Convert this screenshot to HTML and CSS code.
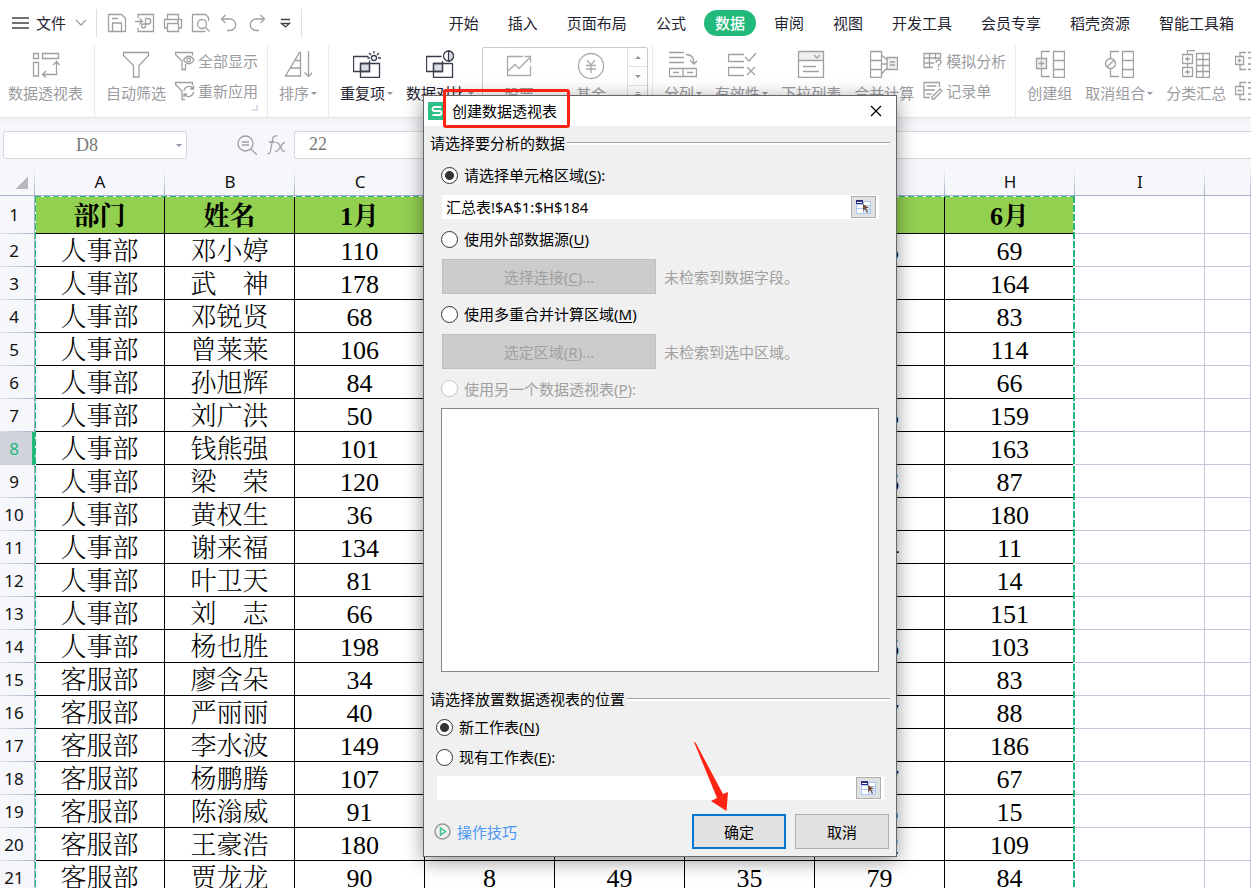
FILE: index.html
```html
<!DOCTYPE html>
<html lang="zh-CN">
<head>
<meta charset="utf-8">
<title>创建数据透视表</title>
<link rel="stylesheet" href="styles.css">
</head>
<body>
<div class="app">
  <header class="topbar">
    <button class="file-menu" type="button">
      <svg class="ic dark" width="18" height="14" viewBox="0 0 18 14"><path d="M0 2h17M0 7h17M0 12h17" stroke-width="1.5"/></svg>
      <span>文件</span>
      <svg class="ic" width="12" height="8" viewBox="0 0 12 8"><path d="M1 1l5 5 5-5"/></svg>
    </button>
    <span class="bar-sep"></span>
    <div class="quick">
      <button type="button" aria-label="保存"><svg class="ic" width="20" height="20" viewBox="0 0 20 20"><path d="M1.500 1.500h13l4 4v13h-17z" stroke-linejoin="round"/><path d="M5 5.500h6M5.500 18v-8h9v8"/></svg></button>
      <button type="button" aria-label="输出为PDF"><svg class="ic" width="20" height="20" viewBox="0 0 20 20"><path d="M3 5V1.500h15.500v17H3V15M0 8.500h7M4.500 5.500l3 3-3 3"/><path d="M10.500 5.500H13a2.500 2.500 0 0 1 0 5.500h-2.500V5.500M10.500 11v2a2 2 0 1 1-2-2h2"/></svg></button>
      <button type="button" aria-label="打印"><svg class="ic" width="20" height="20" viewBox="0 0 20 20"><path d="M4.500 6V1.500h11V6M4.500 15h-3V6.500h17V15h-3M4.500 10.500h11v8h-11zM14 8.500h2"/></svg></button>
      <button type="button" aria-label="打印预览"><svg class="ic" width="20" height="20" viewBox="0 0 20 20"><path d="M17.500 8V4.500l-3-3h-13v17h13"/><circle cx="11" cy="11" r="4.500"/><path d="M14.500 14.500l4 4"/></svg></button>
      <button type="button" aria-label="撤销"><svg class="ic" width="20" height="20" viewBox="0 0 20 20"><path d="M6.500 2L2.500 6l4 4M2.500 6H11a5.500 5.500 0 0 1 0 11.500H8"/></svg></button>
      <button type="button" aria-label="恢复"><svg class="ic" width="20" height="20" viewBox="0 0 20 20"><path d="M13.500 2l4 4-4 4M17.500 6H9a5.500 5.500 0 0 0 0 11.500h3"/></svg></button>
      <button type="button" aria-label="自定义"><svg class="ic dark" width="20" height="20" viewBox="0 0 20 20"><path d="M6 6.500h9M6.500 10.500l4 3.500 4-3.500z"/></svg></button>
    </div>
    <span class="bar-sep"></span>
    <nav class="tabs">
      <button type="button">开始</button>
      <button type="button">插入</button>
      <button type="button">页面布局</button>
      <button type="button">公式</button>
      <button type="button" class="active">数据</button>
      <button type="button">审阅</button>
      <button type="button">视图</button>
      <button type="button">开发工具</button>
      <button type="button">会员专享</button>
      <button type="button">稻壳资源</button>
      <button type="button">智能工具箱</button>
    </nav>
  </header>

  <section class="ribbon">
    <button class="big" type="button">
      <svg class="ic" width="28" height="28" viewBox="0 0 28 28"><path d="M1.500 3.500h5v5h-5zM10.500 3.500h16v5h-16zM1.500 12.500h5v13.500h-5zM11 24.500h13.500V12M14 21l-3.500 3.500 3.500 3M21 15l3.500-3.500 3 3.500"/></svg>
      <span>数据透视表</span>
    </button>
    <i class="sep"></i>
    <button class="big" type="button">
      <svg class="ic" width="28" height="28" viewBox="0 0 28 28"><path d="M1.500 2.500h25v3L17 15.500V27h-5.500V15.500L1.500 5.500z"/></svg>
      <span>自动筛选</span>
    </button>
    <div class="stack filter-stack">
      <button type="button"><svg class="ic" width="20" height="20" viewBox="0 0 20 20"><path d="M17.500 4.500V1.500h-17v2L7 10v8.500h3.500V13"/><path d="M8.500 9c3-5 7.500-5 10.500 0-3 5-7.500 5-10.500 0z"/><circle cx="13.700" cy="9" r="1.800"/></svg>全部显示</button>
      <button type="button"><svg class="ic" width="20" height="20" viewBox="0 0 20 20"><path d="M17.500 4V1.500h-17v2L7 10v8.500h3"/><path d="M9 10a5 5 0 0 1 9-2.500M18.500 4.500v3.500H15M18.500 11a5 5 0 0 1-9 2.500M9 16v-3h3"/></svg>重新应用</button>
    </div>
    <i class="sep"></i>
    <button class="big" type="button">
      <svg class="ic" width="28" height="28" viewBox="0 0 28 28"><path d="M16.500 2.500V26h-15L15.500 2.500zM11 10.500h5.500M6.500 18h10M24.500 1v25.500M20.500 22.500l4 4 4-4"/></svg>
      <span>排序<b class="caret"></b></span>
    </button>
    <i class="sep"></i>
    <button class="big on" type="button">
      <svg class="ic" width="28" height="28" viewBox="0 0 28 28"><path class="fill" d="M7.500 13.500h9v8h-9z"/><path d="M16.500 10.500v11H.500v-15h15M7.500 13.500h19v14h-19z"/><circle cx="21" cy="8" r="2.500"/><path d="M21 1v2.500M16 3l2 2M26 3l-2 2M14.500 8H17M25 8h3"/></svg>
      <span>重复项<b class="caret"></b></span>
    </button>
    <button class="big on" type="button">
      <svg class="ic" width="28" height="28" viewBox="0 0 28 28"><path class="fill" d="M7.500 13.500h9v8h-9z"/><path d="M16.500 11v10.500H.500v-15h15M26.500 13.500v14h-19v-14h19"/><circle cx="22.500" cy="6" r="5"/><path class="fill" d="M22.500 1a5 5 0 0 1 0 10z"/></svg>
      <span>数据对比<b class="caret"></b></span>
    </button>
    <div class="gallery">
      <button type="button"><svg class="ic" width="28" height="28" viewBox="0 0 28 28"><path d="M18 4.500H2.500v19h23V14M3 19l7-6.500 4 4L25.500 5M19.500 4.500h6v6"/></svg>股票</button>
      <button type="button"><svg class="ic" width="28" height="28" viewBox="0 0 28 28"><circle cx="14" cy="14" r="12.500"/><path d="M10 8l4 5 4-5M9 13.500h10M9 17h10M14 13v8"/></svg>基金</button>
      <div class="spin"><span><b class="caret up"></b></span><span><b class="caret"></b></span><span><b class="caret line"></b></span></div>
    </div>
    <i class="sep"></i>
    <button class="big" type="button">
      <svg class="ic" width="28" height="28" viewBox="0 0 28 28"><path d="M0 2.500h15M0 7.500h15M0 12.500h15M17 4.500q8 0 8 9M21 10l4 4 4-4M.500 18.500h27v8H.500zM14 18.500v8M4 22.500h6M18 22.500h6"/></svg>
      <span>分列<b class="caret"></b></span>
    </button>
    <button class="big" type="button">
      <svg class="ic" width="28" height="28" viewBox="0 0 28 28"><path d="M16 4.500H.500v7H16M16 17.500H.500v8H16M17 7l4 4 7-8M19 17l8 8M27 17l-8 8"/></svg>
      <span>有效性<b class="caret"></b></span>
    </button>
    <button class="big" type="button">
      <svg class="ic" width="28" height="28" viewBox="0 0 28 28"><path class="tint" d="M1.500 1.500h25v9h-25z"/><path d="M1.500 1.500h25v26h-25zM1.500 10.500h25M17 5l3 3 3-3M6 16.500h13M6 21.500h16"/></svg>
      <span>下拉列表</span>
    </button>
    <button class="big" type="button">
      <svg class="ic" width="28" height="28" viewBox="0 0 28 28"><path class="tint" d="M17 7.500h11v12H17z"/><path d="M.500 1.500h11v26H.500zM.500 10.500h11M.500 19.500h11M11.500 5L17 10M11.500 14H17M11.500 24L17 18M17 7.500h10.500v12H17zM20 12h5M20 15h5"/></svg>
      <span>合并计算</span>
    </button>
    <div class="stack">
      <button type="button"><svg class="ic" width="20" height="20" viewBox="0 0 20 20"><path d="M17.500 8V2.500H1v14h9M1 7h16.500M1 12h10M6.500 2.500v14M12.500 2.500v6M13 12q0-3 2.500-3T18 11.500q0 1.500-2.500 2.500v2M15.500 17.500V19"/></svg>模拟分析</button>
      <button type="button"><svg class="ic" width="20" height="20" viewBox="0 0 20 20"><path d="M16.500 6V1.500H1v15h6M3.500 5h10M1 9h11M3.500 13h5M17 8l2 2-8 8H9v-2z"/></svg>记录单</button>
    </div>
    <i class="sep"></i>
    <button class="big" type="button">
      <svg class="ic" width="30" height="28" viewBox="0 0 30 28"><path class="tint" d="M1.500 8.500h10v10h-10z"/><path d="M15 1.500H6.500V8M6.500 19v7.500H15M1.500 8.500h10v10h-10zM6.500 10.500v6M3.500 13.500h6M18.500 1.500h11v26h-11zM18.500 10.500h11M18.500 19.500h11"/></svg>
      <span>创建组</span>
    </button>
    <button class="big" type="button">
      <svg class="ic" width="30" height="28" viewBox="0 0 30 28"><path d="M15 1.500H6.500V8M6.500 19v7.500H15M3 17l7-7M18.500 1.500h11v26h-11zM18.500 10.500h11M18.500 19.500h11"/><circle cx="6.500" cy="13.500" r="5"/></svg>
      <span>取消组合<b class="caret"></b></span>
    </button>
    <button class="big" type="button">
      <svg class="ic" width="28" height="28" viewBox="0 0 28 28"><path d="M13 .500H5.500v3M.500 4.500h10v9H.500zM3 9h5M5.500 6.500v5M5.500 14v3M.500 17.500h10v9H.500zM3 22h5M5.500 19.500v5M14.500 3.500h13v24h-13zM21 3.500v24M14.500 9.500h13M14.500 15.500h13M14.500 21.500h13"/></svg>
      <span>分类汇总</span>
    </button>
    <div class="stack">
      <button type="button" aria-label="展开明细"><svg class="ic" width="20" height="20" viewBox="0 0 20 20"><path d="M11 1.500H5V5M5 14v4.500h6M.500 5.500h8v8h-8zM2.500 9.500h4M4.500 7.500v4M13 1.500h7M13 7h7M13 13h7M13 18.500h7"/></svg></button>
      <button type="button" aria-label="折叠明细"><svg class="ic" width="20" height="20" viewBox="0 0 20 20"><path d="M11 1.500H5V5M5 14v4.500h6M.500 5.500h8v8h-8zM2.500 9.500h4M13 1.500h7M13 7h7M13 13h7M13 18.500h7"/></svg></button>
    </div>
  </section>

  <section class="formula">
    <div class="namebox"><input type="text" value="D8" aria-label="名称框"><b class="caret"></b></div>
    <div class="fx">
      <svg class="ic" width="20" height="20" viewBox="0 0 20 20"><circle cx="8.500" cy="8.500" r="7.500"/><path d="M14 14l6 6M5 7h7M5 10h7"/></svg>
      <svg class="ic" width="19" height="20" viewBox="0 0 19 20"><path d="M10 1Q6 0 5.500 5L3.500 16Q3 19 .500 18.500M2 7h6M9 8q2-1 3 1l3 6q1 2 3 1M18 7.500q-2 0-4 3.500l-2 3q-2 3-4 2"/></svg>
    </div>
    <input class="fbox" type="text" value="22" aria-label="编辑栏">
  </section>

  <main class="sheet">
    <table>
      <colgroup><col class="c-row"><col><col><col><col><col><col><col><col><col><col class="c-rest"></colgroup>
      <thead><tr><th class="corner"></th><th>A</th><th>B</th><th>C</th><th>D</th><th>E</th><th>F</th><th>G</th><th>H</th><th>I</th><th></th></tr></thead>
      <tbody>
      <tr class="head"><th>1</th><td>部门</td><td>姓名</td><td>1月</td><td>2月</td><td>3月</td><td>4月</td><td>5月</td><td>6月</td><td></td><td></td></tr>
      <tr><th>2</th><td>人事部</td><td>邓小婷</td><td>110</td><td></td><td></td><td></td><td>125</td><td>69</td><td></td><td></td></tr>
      <tr><th>3</th><td>人事部</td><td>武　神</td><td>178</td><td></td><td></td><td></td><td></td><td>164</td><td></td><td></td></tr>
      <tr><th>4</th><td>人事部</td><td>邓锐贤</td><td>68</td><td></td><td></td><td></td><td></td><td>83</td><td></td><td></td></tr>
      <tr><th>5</th><td>人事部</td><td>曾莱莱</td><td>106</td><td></td><td></td><td></td><td></td><td>114</td><td></td><td></td></tr>
      <tr><th>6</th><td>人事部</td><td>孙旭辉</td><td>84</td><td></td><td></td><td></td><td></td><td>66</td><td></td><td></td></tr>
      <tr><th>7</th><td>人事部</td><td>刘广洪</td><td>50</td><td></td><td></td><td></td><td>165</td><td>159</td><td></td><td></td></tr>
      <tr class="cur"><th>8</th><td>人事部</td><td>钱熊强</td><td>101</td><td></td><td></td><td></td><td></td><td>163</td><td></td><td></td></tr>
      <tr><th>9</th><td>人事部</td><td>梁　荣</td><td>120</td><td></td><td></td><td></td><td>136</td><td>87</td><td></td><td></td></tr>
      <tr><th>10</th><td>人事部</td><td>黄权生</td><td>36</td><td></td><td></td><td></td><td></td><td>180</td><td></td><td></td></tr>
      <tr><th>11</th><td>人事部</td><td>谢来福</td><td>134</td><td></td><td></td><td></td><td>174</td><td>11</td><td></td><td></td></tr>
      <tr><th>12</th><td>人事部</td><td>叶卫天</td><td>81</td><td></td><td></td><td></td><td></td><td>14</td><td></td><td></td></tr>
      <tr><th>13</th><td>人事部</td><td>刘　志</td><td>66</td><td></td><td></td><td></td><td></td><td>151</td><td></td><td></td></tr>
      <tr><th>14</th><td>人事部</td><td>杨也胜</td><td>198</td><td></td><td></td><td></td><td>156</td><td>103</td><td></td><td></td></tr>
      <tr><th>15</th><td>客服部</td><td>廖含朵</td><td>34</td><td></td><td></td><td></td><td></td><td>83</td><td></td><td></td></tr>
      <tr><th>16</th><td>客服部</td><td>严丽丽</td><td>40</td><td></td><td></td><td></td><td>127</td><td>88</td><td></td><td></td></tr>
      <tr><th>17</th><td>客服部</td><td>李水波</td><td>149</td><td></td><td></td><td></td><td></td><td>186</td><td></td><td></td></tr>
      <tr><th>18</th><td>客服部</td><td>杨鹏腾</td><td>107</td><td></td><td></td><td></td><td>147</td><td>67</td><td></td><td></td></tr>
      <tr><th>19</th><td>客服部</td><td>陈滃威</td><td>91</td><td></td><td></td><td></td><td>115</td><td>15</td><td></td><td></td></tr>
      <tr><th>20</th><td>客服部</td><td>王豪浩</td><td>180</td><td></td><td></td><td></td><td>182</td><td>109</td><td></td><td></td></tr>
      <tr><th>21</th><td>客服部</td><td>贾龙龙</td><td>90</td><td>8</td><td>49</td><td>35</td><td>79</td><td>84</td><td></td><td></td></tr>
      </tbody>
    </table>
    <div class="marquee"></div>
  </main>
</div>

<form class="dialog" aria-labelledby="dlg-title">
  <div class="dlg-title">
    <span class="logo"><svg width="18" height="18" viewBox="0 0 18 18"><path d="M13 5H6.500a2 2 0 0 0 0 4h5a2 2 0 0 1 0 4H4.500" fill="none" stroke="#fff" stroke-width="1.800"/></svg></span>
    <span id="dlg-title">创建数据透视表</span>
    <button type="button" class="close" aria-label="关闭"><svg width="12" height="12" viewBox="0 0 12 12"><path d="M1 1l10 10M11 1L1 11" stroke="#000" stroke-width="1.300"/></svg></button>
  </div>
  <div class="dlg-body">
    <h2>请选择要分析的数据</h2>
    <div class="source">
      <label class="opt first"><input type="radio" name="src" checked><span>请选择单元格区域(<u>S</u>):</span></label>
      <div class="range"><input type="text" value="汇总表!$A$1:$H$184" aria-label="单元格区域"><button type="button" aria-label="选择区域"><svg width="15" height="14" viewBox="0 0 15 14"><path d="M0 1h15v13H0z" fill="#a9c9f2"/><path d="M1 5h6v3H1zM1 9h6v4H1zM8 2h6v3H8z" fill="#fff"/><path d="M8 6h6v3H8zM8 10h6v3H8z" fill="#dce9fb"/><path d="M0 0h7v4H0z" fill="#2e2e86"/><path d="M1 2h5v1H1z" fill="#fff"/><path d="M7 4v7l2-2 2 4 1-1-2-4h3z" fill="#7b4b3c"/></svg></button></div>
      <label class="opt"><input type="radio" name="src"><span>使用外部数据源(<u>U</u>)</span></label>
      <div class="pick"><button type="button" disabled>选择连接(<u>C</u>)...</button><span>未检索到数据字段。</span></div>
      <label class="opt"><input type="radio" name="src"><span>使用多重合并计算区域(<u>M</u>)</span></label>
      <div class="pick"><button type="button" disabled>选定区域(<u>R</u>)...</button><span>未检索到选中区域。</span></div>
      <label class="opt off"><input type="radio" name="src" disabled><span>使用另一个数据透视表(<u>P</u>):</span></label>
      <div class="listbox"></div>
    </div>
    <h2 class="second">请选择放置数据透视表的位置</h2>
    <div class="target">
      <label class="opt near"><input type="radio" name="dst" checked><span>新工作表(<u>N</u>)</span></label>
      <label class="opt last"><input type="radio" name="dst"><span>现有工作表(<u>E</u>):</span></label>
      <div class="range"><input type="text" value="" aria-label="现有工作表位置"><button type="button" aria-label="选择位置"><svg width="15" height="14" viewBox="0 0 15 14"><path d="M0 1h15v13H0z" fill="#a9c9f2"/><path d="M1 5h6v3H1zM1 9h6v4H1zM8 2h6v3H8z" fill="#fff"/><path d="M8 6h6v3H8zM8 10h6v3H8z" fill="#dce9fb"/><path d="M0 0h7v4H0z" fill="#2e2e86"/><path d="M1 2h5v1H1z" fill="#fff"/><path d="M7 4v7l2-2 2 4 1-1-2-4h3z" fill="#7b4b3c"/></svg></button></div>
    </div>
    <div class="actions">
      <a href="#"><svg width="17" height="17" viewBox="0 0 17 17" fill="none"><circle cx="8.500" cy="8.500" r="7.500" stroke="#999" stroke-width="1.500"/><path d="M6.500 5l5 3.500-5 3.500z" stroke="#3cc48a" stroke-width="1.500"/></svg>操作技巧</a>
      <button type="submit" class="ok">确定</button>
      <button type="button">取消</button>
    </div>
  </div>
  <div class="callout"></div>
  <svg class="pointer" width="36" height="72" viewBox="0 0 36 72"><path d="M1 1L2.500 1.500 30 53 35 51 33.500 70 18 60 24 57z" fill="#ff2314"/></svg>
</form>
</body>
</html>
```
FILE: styles.css
```css
* { box-sizing: border-box; }

body {
  margin: 0;
  font: 15px/20px "Noto Sans", "Noto Sans CJK SC", sans-serif;
  color: #1f2330;
  overflow: hidden;
}

button {
  font: inherit;
  color: inherit;
  background: none;
  border: 0;
  padding: 0;
  white-space: nowrap;
}

input { font: inherit; color: inherit; min-width: 0; }

.app { display: flex; flex-direction: column; height: 100vh; background: #fff; }

.ic { fill: none; stroke: #a0a0a4; stroke-width: 1.3; flex: none; }
.ic.dark { stroke: #444; }
.ic .tint { fill: #efeff1; stroke: none; }

.caret {
  display: inline-block;
  border: 3px solid transparent;
  border-top-color: #8f95a5;
  border-bottom: 0;
  flex: none;
}
.caret.up { border-top: 0; border-bottom: 3px solid #8f95a5; }

/* title row */
.topbar { display: flex; align-items: center; height: 46px; flex: none; padding: 0 17px 0 12px; }
.file-menu { display: flex; align-items: center; gap: 6px; }
.file-menu .ic:last-child { margin-left: 3px; }
.bar-sep { width: 1px; height: 28px; background: #dcdee3; margin-left: 9px; flex: none; }
.quick { display: flex; gap: 8px; margin-left: 10px; }
.quick button { display: flex; }
.quick + .bar-sep { margin-left: 6px; }
.tabs { display: flex; gap: 29px; margin-left: auto; }
.tabs .active {
  background: #21b97c;
  color: #fff;
  font-weight: 500;
  border-radius: 13px;
  padding: 3px 11px;
  margin: 0 -11px;
}
.tabs button { padding: 3px 0; }

/* ribbon */
.ribbon {
  display: flex;
  gap: 9px;
  height: 72px;
  flex: none;
  padding-left: 6px;
  border-bottom: 1px solid #e2e4e8;
  color: #9b9b9f;
  overflow: hidden;
}
.big { display: flex; flex-direction: column; align-items: center; gap: 5px; padding: 4px 2px 0; flex: none; }
.big span { display: flex; align-items: center; gap: 2px; }
.big.on { color: #1f2330; }
.big.on .ic { stroke: #3a3e4c; }
.big.on .fill { fill: #dadde3; }
.sep { width: 1px; background: #e8e9ed; flex: none; }
.stack { display: flex; flex-direction: column; gap: 10px; padding-top: 5px; margin-left: -2px; flex: none; }
.stack button { display: flex; align-items: center; gap: 3px; }
.filter-stack {
  background: linear-gradient(#dcdfea, #dcdfea) right bottom 6px / 6px 2px no-repeat,
              linear-gradient(#dcdfea, #dcdfea) right bottom 6px / 2px 6px no-repeat;
}
.gallery { display: flex; width: 166px; margin: 1px -5px 0 -3px; border: 1px solid #c9cad0; border-radius: 2px; flex: none; }
.gallery > button { display: flex; flex-direction: column; align-items: center; width: 72px; gap: 4px; padding-top: 4px; }
.gallery .ic { stroke: #aaa; }
.spin { flex: 1; border-left: 1px solid #e0e2e8; display: flex; flex-direction: column; }
.spin span { height: 19px; display: flex; align-items: center; justify-content: center; border-bottom: 1px solid #e0e2e8; }
.caret.line { box-shadow: 0 -3px 0 -1px #8f95a5; }

/* formula bar */
.formula {
  display: flex;
  align-items: center;
  height: 50px;
  flex: none;
  padding: 4px 0 0 3px;
  background: linear-gradient(#f0f1f4, #f5f7fa 6px);
  font-family: "Liberation Serif", serif;
  font-size: 18px;
  color: #777;
}
.namebox {
  display: flex;
  align-items: center;
  width: 184px;
  height: 28px;
  padding-right: 4px;
  background: #fff;
  border: 1px solid #d5d8de;
  border-radius: 3px;
}
.namebox input { flex: 1; border: 0; background: none; text-align: center; padding: 0 6px 0 0; }
.fx { display: flex; gap: 10px; margin: 0 8px 0 50px; }
.fbox { flex: 1; height: 28px; border: 1px solid #d5d8de; border-right: 0; border-radius: 3px 0 0 3px; padding: 0 14px 2px; background: #fff; }

/* sheet */
.sheet { flex: 1; min-height: 0; overflow: hidden; position: relative; }
table { width: 100%; table-layout: fixed; border-collapse: separate; border-spacing: 0; }
col { width: 130px; }
.c-row { width: 35px; }
.c-rest { width: auto; }
thead th {
  height: 28px;
  padding: 0;
  font-weight: 400;
  font-size: 17px;
  color: #111;
  border-bottom: 1px solid #a9b1c9;
  background: linear-gradient(transparent, #a9b1c9) right / 1px 100% no-repeat #f5f7fa;
}
.corner {
  background: linear-gradient(135deg, transparent 50%, #b9b9bd 50%) 15px 8px / 13px 13px no-repeat,
              linear-gradient(transparent, #a9b1c9) right / 1px 100% no-repeat #f5f7fa;
}
tbody th {
  padding: 0 6px 0 0;
  font-weight: 400;
  font-size: 17px;
  line-height: 24px;
  color: #111;
  border-right: 1px solid #a9b1c9;
  background: linear-gradient(90deg, #dfe2ea, #a9b1c9) bottom / 100% 1px no-repeat #f5f7fa;
}
td {
  height: 33px;
  padding: 4px 0 0;
  text-align: center;
  font: 300 26px/28px "Liberation Serif", "Noto Serif CJK SC", "Noto Sans CJK SC", serif;
  color: #000;
  border-right: 1px solid #000;
  border-bottom: 1px solid #000;
  white-space: nowrap;
}
td:nth-child(n+10) { border-color: #c2c8da; }
.head td { height: 38px; font-weight: 700; background: #92d050; }
.head td:nth-child(n+10) { background: #fff; }
.cur th {
  color: #21b97c;
  padding-right: 4px;
  background: #d0d3dc;
  border-right: 3px solid #21b97c;
}
.marquee {
  position: absolute;
  top: 28px;
  left: 35px;
  width: 1040px;
  bottom: 0;
  pointer-events: none;
  background:
    repeating-linear-gradient(90deg, #21b97c 0 6px, #fff 6px 9px) top / 100% 1px no-repeat,
    repeating-linear-gradient(#21b97c 0 7px, #fff 7px 9px) left / 1px 100% no-repeat,
    repeating-linear-gradient(#21b97c 0 7px, #fff 7px 9px) right / 2px 100% no-repeat;
}

/* dialog window */
.dialog {
  position: absolute;
  left: 423px;
  top: 95px;
  width: 474px;
  background: #f0f0f0;
  border: 1px solid #666;
  box-shadow: 0 4px 18px rgba(0, 0, 0, .42);
  color: #000;
}
.dlg-title { display: flex; align-items: center; height: 30px; padding: 0 14px 0 4px; background: #fff; }
.logo { display: flex; margin-right: 6px; background: #2cc088; }
.close { display: flex; margin-left: auto; }
.dlg-body { padding: 2px 6px 7px; }
.dlg-body h2 { display: flex; align-items: center; height: 30px; margin: 0; font-size: 15px; font-weight: 400; }
.dlg-body h2::after { content: ""; flex: 1; height: 2px; margin-left: 2px; border-top: 1px solid #a0a0a0; background: #fff; }
.dlg-body .second { margin-top: 12px; }
.source { padding: 0 11px; }
.target { padding: 0 6px; }
.opt { display: flex; align-items: center; gap: 6px; height: 40px; }
.opt.first { height: 34px; margin-bottom: 3px; }
.opt.off { height: 39px; color: #a0a0a0; }
.opt.near { height: 26px; }
.opt.last { height: 34px; margin-bottom: 2px; }
.opt input {
  appearance: none;
  width: 17px;
  height: 17px;
  margin: 0;
  border: 1px solid #333;
  border-radius: 50%;
  background: #fff;
}
.opt input:checked { background: radial-gradient(circle, #333 4px, #fff 5px); }
.opt input:disabled { border-color: #c4c4c4; }
u { text-underline-offset: 2px; }
.range { display: flex; align-items: center; height: 24px; padding-right: 3px; background: #fff; margin-left: 1px; }
.range input { flex: 1; border: 0; background: none; padding: 0 4px; outline: 0; }
.range button {
  display: flex;
  align-items: center;
  justify-content: center;
  width: 25px;
  height: 22px;
  background: #e1e1e1;
  border: 1px solid #adadad;
}
.pick { display: flex; align-items: center; gap: 8px; margin-left: 1px; color: #a0a0a0; }
.pick button { width: 214px; height: 35px; background: #ccc; border: 1px solid #bfbfbf; }
.listbox { height: 264px; background: #fff; border: 1px solid #828790; }
.actions { display: flex; align-items: center; gap: 9px; margin-top: 14px; padding-right: 1px; }
.actions a { display: flex; align-items: center; gap: 6px; margin: 0 auto 0 4px; color: #4a97f5; text-decoration: none; }
.actions button { width: 94px; height: 35px; background: #e1e1e1; border: 1px solid #adadad; }
.actions .ok { border: 2px solid #0078d7; }

/* annotations */
.callout { position: absolute; left: 19px; top: -7px; width: 127px; height: 39px; border: 3px solid #ff2314; border-radius: 3px; }
.pointer { position: absolute; left: 269px; top: 645px; }
```
